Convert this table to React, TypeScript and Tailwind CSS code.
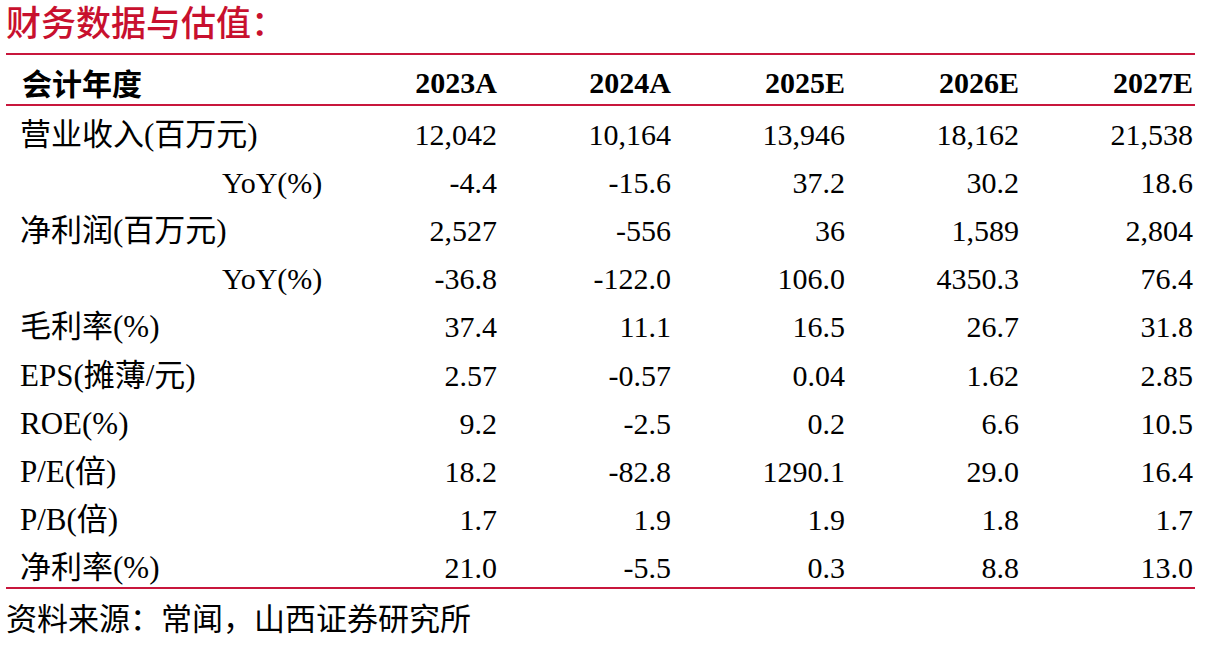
const HEAD = ['2023A', '2024A', '2025E', '2026E', '2027E']

const ROWS: { label: string; sub?: boolean; values: string[] }[] = [
  { label: '营业收入(百万元)', values: ['12,042', '10,164', '13,946', '18,162', '21,538'] },
  { label: 'YoY(%)', sub: true, values: ['-4.4', '-15.6', '37.2', '30.2', '18.6'] },
  { label: '净利润(百万元)', values: ['2,527', '-556', '36', '1,589', '2,804'] },
  { label: 'YoY(%)', sub: true, values: ['-36.8', '-122.0', '106.0', '4350.3', '76.4'] },
  { label: '毛利率(%)', values: ['37.4', '11.1', '16.5', '26.7', '31.8'] },
  { label: 'EPS(摊薄/元)', values: ['2.57', '-0.57', '0.04', '1.62', '2.85'] },
  { label: 'ROE(%)', values: ['9.2', '-2.5', '0.2', '6.6', '10.5'] },
  { label: 'P/E(倍)', values: ['18.2', '-82.8', '1290.1', '29.0', '16.4'] },
  { label: 'P/B(倍)', values: ['1.7', '1.9', '1.9', '1.8', '1.7'] },
  { label: '净利率(%)', values: ['21.0', '-5.5', '0.3', '8.8', '13.0'] },
]

const serif = "font-['Liberation_Serif','Noto_Sans_CJK_SC',serif]"

export default function App() {
  return (
    <div className="min-h-[654px] w-[1226px] bg-white text-black">
      <div className="ml-[6px] w-[1189px]">
        <div className="h-[53px] pt-[1px] font-['Noto_Sans_CJK_SC',sans-serif] text-[35px] font-medium leading-[40px] text-[#c8102e]">
          财务数据与估值：
        </div>
        <div className="border-t-2 border-[#c8163c]" />
        <div className="grid h-[49px] grid-cols-[317px_repeat(5,174px)] items-end pb-[4px]">
          <div className="pl-[16px] font-['Noto_Sans_CJK_SC',sans-serif] text-[30px] font-bold leading-[36px]">
            会计年度
          </div>
          {HEAD.map((h) => (
            <div key={h} className={`${serif} text-right text-[30px] font-bold leading-[34px]`}>
              {h}
            </div>
          ))}
        </div>
        <div className="border-t-2 border-[#c8163c]" />
        {ROWS.map((r, i) => (
          <div
            key={i}
            className="grid h-[48.1px] grid-cols-[317px_repeat(5,174px)] items-end pb-[2px]"
          >
            <div
              className={`${serif} whitespace-nowrap leading-[34px] ${r.sub ? 'pl-[216px] text-[30px]' : 'pl-[14px] text-[31px]'}`}
            >
              {r.label}
            </div>
            {r.values.map((v, j) => (
              <div key={j} className={`${serif} text-right text-[30px] leading-[34px]`}>
                {v}
              </div>
            ))}
          </div>
        ))}
        <div className="border-t-2 border-[#c8163c]" />
        <div className="pt-[8px] font-['Noto_Sans_CJK_SC',sans-serif] text-[31px] leading-[40px]">
          资料来源：常闻，山西证券研究所
        </div>
      </div>
    </div>
  )
}
